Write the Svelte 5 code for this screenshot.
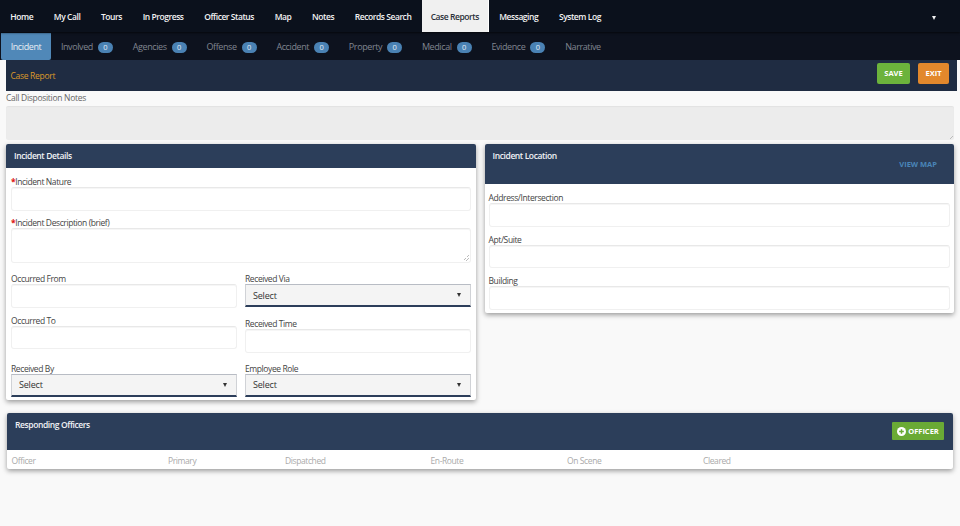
<script>
	const mainTabs = ['Home', 'My Call', 'Tours', 'In Progress', 'Officer Status', 'Map', 'Notes', 'Records Search', 'Case Reports', 'Messaging', 'System Log'];
	const subTabs = [
		{ name: 'Incident' },
		{ name: 'Involved', count: 0 },
		{ name: 'Agencies', count: 0 },
		{ name: 'Offense', count: 0 },
		{ name: 'Accident', count: 0 },
		{ name: 'Property', count: 0 },
		{ name: 'Medical', count: 0 },
		{ name: 'Evidence', count: 0 },
		{ name: 'Narrative' }
	];
	const officerCols = [
		{ name: 'Officer', w: 156.5 },
		{ name: 'Primary', w: 117 },
		{ name: 'Dispatched', w: 145.5 },
		{ name: 'En-Route', w: 136.5 },
		{ name: 'On Scene', w: 136 },
		{ name: 'Cleared', w: 100 }
	];
</script>

<div class="page">
	<nav class="main-nav">
		{#each mainTabs as tab}
			<a class="main-tab" class:active={tab === 'Case Reports'} href="#top">{tab}</a>
		{/each}
		<span class="caret main-caret"></span>
	</nav>

	<nav class="sub-nav">
		{#each subTabs as tab}
			<a class="sub-tab" class:active={tab.name === 'Incident'} href="#top">
				{tab.name}
				{#if tab.count !== undefined}
					<span class="badge">{tab.count}</span>
				{/if}
			</a>
		{/each}
	</nav>

	<header class="report-bar">
		<span class="report-title">Case Report</span>
		<div class="report-actions">
			<button class="btn save">SAVE</button>
			<button class="btn exit">EXIT</button>
		</div>
	</header>

	<section class="notes">
		<div class="notes-label">Call Disposition Notes</div>
		<div class="notes-box"><span class="grip"></span></div>
	</section>

	<div class="columns">
		<section class="panel details">
			<h2 class="panel-head">Incident Details</h2>
			<div class="details-body">
				<div class="field">
					<span class="lbl"><b>*</b>Incident Nature</span>
					<div class="input"></div>
				</div>
				<div class="field desc">
					<span class="lbl"><b>*</b>Incident Description (brief)</span>
					<div class="input area"><span class="grip"></span></div>
				</div>
				<div class="split">
					<div class="col">
						<div class="field">
							<span class="lbl">Occurred From</span>
							<div class="input"></div>
						</div>
						<div class="field to">
							<span class="lbl">Occurred To</span>
							<div class="input"></div>
						</div>
						<div class="field by">
							<span class="lbl">Received By</span>
							<div class="select">Select<span class="caret"></span></div>
						</div>
					</div>
					<div class="col">
						<div class="field">
							<span class="lbl">Received Via</span>
							<div class="select">Select<span class="caret"></span></div>
						</div>
						<div class="field time">
							<span class="lbl">Received Time</span>
							<div class="input"></div>
						</div>
						<div class="field role">
							<span class="lbl">Employee Role</span>
							<div class="select">Select<span class="caret"></span></div>
						</div>
					</div>
				</div>
			</div>
		</section>

		<section class="panel location">
			<div class="panel-head tall">
				<h2>Incident Location</h2>
				<a class="view-map" href="#top">VIEW MAP</a>
			</div>
			<div class="location-body">
				<div class="field">
					<span class="lbl">Address/Intersection</span>
					<div class="input"></div>
				</div>
				<div class="field">
					<span class="lbl">Apt/Suite</span>
					<div class="input"></div>
				</div>
				<div class="field">
					<span class="lbl">Building</span>
					<div class="input"></div>
				</div>
			</div>
		</section>
	</div>

	<section class="panel officers">
		<div class="panel-head officers-head">
			<h2>Responding Officers</h2>
			<button class="btn add">
				<svg width="9" height="9" viewBox="0 0 10 10" aria-hidden="true">
					<circle cx="5" cy="5" r="5" fill="#fff" />
					<path d="M5 2.4v5.2M2.4 5h5.2" stroke="#6aaa35" stroke-width="1.6" />
				</svg>
				OFFICER
			</button>
		</div>
		<div class="officers-cols">
			{#each officerCols as col}
				<span style="width: {col.w}px">{col.name}</span>
			{/each}
		</div>
	</section>
</div>

<style>
	:global(body) {
		margin: 0;
		background: #f9f9f9;
	}

	.page {
		height: 526px;
		overflow: hidden;
		font-family: 'Open Sans', 'Noto Sans', sans-serif;
		font-size: 8.5px;
		letter-spacing: -0.4px;
		color: #444;
		background: #f9f9f9;
	}

	.main-nav {
		display: flex;
		align-items: stretch;
		height: 32px;
		background: #0b111c;
		position: relative;
		z-index: 1;
		box-shadow: 0 1px 2px rgba(0, 0, 0, 0.6);
	}

	.main-tab {
		display: flex;
		align-items: center;
		padding: 0 10.35px;
		color: #f2f2f2;
		font-weight: 600;
		letter-spacing: -0.45px;
		text-decoration: none;
		white-space: nowrap;
	}

	.main-tab.active {
		background: #f0f0f0;
		color: #2a2f38;
		border-right: 1px solid #fff;
		padding: 0 9px;
	}

	.caret {
		width: 0;
		height: 0;
		border-left: 2.5px solid transparent;
		border-right: 2.5px solid transparent;
		border-top: 4px solid #333;
	}

	.main-caret {
		position: absolute;
		right: 24.5px;
		top: 15.5px;
		border-top-color: #f2f2f2;
	}

	.sub-nav {
		display: flex;
		align-items: stretch;
		height: 27px;
		padding: 1px 0 0 1px;
		background: #0d121e;
	}

	.sub-tab {
		display: flex;
		align-items: center;
		gap: 5px;
		padding: 0 9.9px;
		color: #808590;
		font-size: 9px;
		text-decoration: none;
		white-space: nowrap;
	}

	.sub-tab.active {
		width: 50px;
		box-sizing: border-box;
		justify-content: center;
		padding: 0;
		background: #5088b8;
		color: #e8eef4;
		border-radius: 0 0 2px 2px;
	}

	.badge {
		display: inline-flex;
		align-items: center;
		justify-content: center;
		width: 15px;
		height: 11px;
		margin-top: 1px;
		border-radius: 6px;
		background: #4a82b4;
		color: #e6edf4;
		font-size: 7.5px;
		letter-spacing: 0;
	}

	.report-bar {
		display: flex;
		align-items: center;
		justify-content: space-between;
		height: 31px;
		width: 951px;
		margin-left: 6px;
		padding: 0 8px 0 4.5px;
		background: #1f2c42;
		box-sizing: border-box;
	}

	.report-title {
		color: #dd9a2a;
		letter-spacing: -0.3px;
	}

	.report-actions {
		display: flex;
		gap: 8px;
		margin-top: -5px;
	}

	.btn {
		border: none;
		border-radius: 2px;
		color: #fff;
		font-family: inherit;
		font-size: 7.5px;
		font-weight: 700;
		letter-spacing: 0;
		padding: 0;
		height: 21px;
	}

	.save {
		width: 33px;
		background: #6cb33c;
	}

	.exit {
		width: 31px;
		background: #e2882c;
	}

	.notes {
		padding: 0 6px;
	}

	.notes-label {
		height: 15px;
		line-height: 13px;
		color: #666;
		letter-spacing: -0.3px;
	}

	.notes-box {
		position: relative;
		height: 34px;
		background: #ececec;
		border-radius: 2px;
		box-shadow: inset 0 1px 1px rgba(0, 0, 0, 0.04);
	}

	.grip {
		position: absolute;
		right: 1px;
		bottom: 1px;
		width: 6px;
		height: 6px;
		background: linear-gradient(135deg, transparent 50%, #bbb 50%, #bbb 58%, transparent 58%, transparent 72%, #bbb 72%, #bbb 80%, transparent 80%);
	}

	.columns {
		display: flex;
		align-items: flex-start;
		gap: 8.5px;
		margin-top: 4px;
		padding: 0 6px;
	}

	.panel {
		background: #fff;
		border-radius: 2px;
		box-shadow: 0 2px 5px rgba(0, 0, 0, 0.38);
	}

	.panel h2 {
		margin: 0;
		font: inherit;
	}

	.panel-head,
	.panel h2.panel-head {
		background: #2c3e5a;
		color: #f0f2f5;
		font-weight: 600;
		border-radius: 2px 2px 0 0;
		box-sizing: border-box;
	}

	.panel h2.panel-head {
		height: 24px;
		line-height: 24px;
		padding-left: 8px;
	}

	.details {
		width: 470px;
		height: 256px;
		flex: none;
	}

	.details-body {
		padding: 7px 5px 0;
	}

	.location {
		width: 469.5px;
		height: 168.5px;
		flex: none;
	}

	.panel-head.tall {
		position: relative;
		height: 40px;
		padding: 6px 8px;
	}

	.view-map {
		position: absolute;
		right: 17px;
		top: 15px;
		color: #4a85b8;
		font-size: 7.5px;
		font-weight: 700;
		letter-spacing: 0;
		text-decoration: none;
	}

	.location-body {
		padding: 7px 4px 0;
	}

	.location-body .field + .field {
		margin-top: 6px;
	}

	.field {
		display: block;
	}

	.lbl {
		display: block;
		height: 12px;
		line-height: 13px;
		color: #444;
		white-space: nowrap;
	}

	.lbl b {
		color: #d11;
		font-weight: 700;
	}

	.input {
		position: relative;
		height: 23.5px;
		box-sizing: border-box;
		background: #fff;
		border: 1px solid #f0f0f0;
		border-top-color: #e8e8e8;
		border-radius: 3px;
		box-shadow: inset 0 1px 0 #f6f6f6;
	}

	.input.area {
		height: 35px;
	}

	.desc {
		margin-top: 5.5px;
	}

	.split {
		display: grid;
		grid-template-columns: 226px 226px;
		gap: 8px;
		margin-top: 9px;
	}

	.to {
		margin-top: 6px;
	}

	.by {
		margin-top: 12.5px;
	}

	.time {
		margin-top: 10px;
	}

	.role {
		margin-top: 9px;
	}

	.select {
		display: flex;
		align-items: center;
		justify-content: space-between;
		height: 23px;
		box-sizing: border-box;
		padding: 0 9px 0 7px;
		background: #f4f4f4;
		border: 1px solid #d0d2d6;
		border-top-color: #b8bcc4;
		border-bottom: 2px solid #2c3e5a;
		color: #333;
		font-size: 9px;
		letter-spacing: -0.2px;
	}

	.officers {
		margin: 13px 7px 0;
		height: 56px;
	}

	.officers-head {
		display: flex;
		align-items: flex-start;
		justify-content: space-between;
		height: 37px;
		padding: 6px 9px 0 8px;
	}

	.add {
		display: inline-flex;
		align-items: center;
		justify-content: center;
		gap: 2px;
		width: 52px;
		height: 18px;
		margin-top: 3px;
		background: #6aaa35;
		border-radius: 1px;
	}

	.officers-cols {
		display: flex;
		align-items: center;
		height: 20px;
		padding-left: 4.5px;
		color: #aaa;
	}
</style>
